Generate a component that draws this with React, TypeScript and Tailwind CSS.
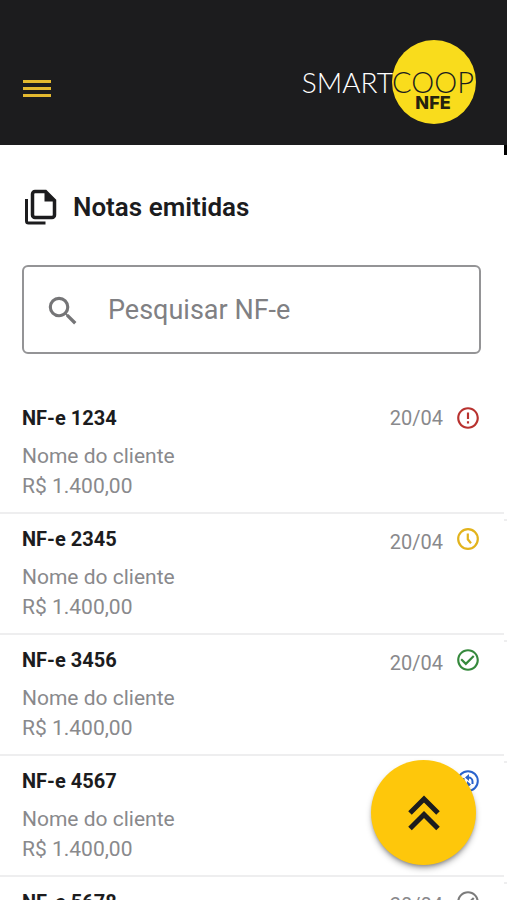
import { MdCheckCircleOutline, MdErrorOutline, MdSearch } from "react-icons/md";

type Status = "error" | "pending" | "done" | "returned" | "draft";

const notes: { id: string; status: Status }[] = [
  { id: "1234", status: "error" },
  { id: "2345", status: "pending" },
  { id: "3456", status: "done" },
  { id: "4567", status: "returned" },
  { id: "5678", status: "draft" },
];

const StatusIcon = ({ status }: { status: Status }) => {
  if (status === "error") return <MdErrorOutline className="size-[26px] text-[#b8322f]" />;
  if (status === "done") return <MdCheckCircleOutline className="size-[26px] text-[#35893c]" />;
  if (status === "draft") return <MdCheckCircleOutline className="size-[26px] text-[#7b7b7b]" />;
  if (status === "pending") {
    return (
      <svg viewBox="0 0 26 26" className="size-[26px] text-[#e2b31c]" fill="none" stroke="currentColor" strokeWidth="2.200">
        <circle cx="13" cy="13" r="9.800" />
        <path d="M12.800 7.500v5.800l3.200 4" />
      </svg>
    );
  }
  return (
    <svg viewBox="0 0 26 26" className="size-[26px] text-[#2a63cc]" fill="none" stroke="currentColor" strokeWidth="2">
      <circle cx="13" cy="13" r="9.800" />
      <path d="M12 9.500h1.500a4 4 0 0 1 4 4V16M8.500 10v2.500a4 4 0 0 0 4 4H14" />
      <path d="M14 6v7l-4-3.500zM12 13v7l4-3.500z" fill="currentColor" stroke="none" />
    </svg>
  );
};

const Logo = () => (
  <svg viewBox="0 0 174 84" className="h-[84px] w-[174px] overflow-visible" role="img" aria-label="SmartCoop NFE">
    <circle cx="132" cy="42" r="42" fill="#f9dc1c" />
    <g fontFamily="Lato, sans-serif" fontWeight="300">
      <text x="91" y="53" textAnchor="end" fontSize="28" fill="#ffffff">
        SMART
      </text>
      <text x="90" y="53" fontSize="29" fill="#1c1c1e">
        COOP
      </text>
    </g>
    <text x="131" y="69" textAnchor="middle" fontFamily="Inter, sans-serif" fontSize="18" fontWeight="800" fill="#25220f">
      NFE
    </text>
  </svg>
);

const App = () => {
  return (
    <div className="min-h-screen bg-white font-[Roboto,sans-serif] text-[#1c1c1e]">
      <header className="flex items-center justify-between bg-[#1c1c1e] pt-10 pr-[31px] pb-[21px] pl-[23px]">
        <button type="button" aria-label="Menu" className="mt-3 flex flex-col gap-1 text-[#e3b92f]">
          <span className="h-[3px] w-7 bg-current" />
          <span className="h-[3px] w-7 bg-current" />
          <span className="h-[3px] w-7 bg-current" />
        </button>
        <Logo />
      </header>

      <div className="flex">
        <main className="min-w-0 flex-1">
          <div className="pt-11 pr-[23px] pl-[22px]">
            <div className="flex items-center gap-[15px]">
              <svg viewBox="0 0 36 36" className="size-9" fill="none" stroke="currentColor" strokeWidth="3.500">
                <path d="M13 2.500h10.500l9 9V26a2.500 2.500 0 0 1-2.500 2.500H13a2.500 2.500 0 0 1-2.500-2.500V5A2.500 2.500 0 0 1 13 2.500z" />
                <path d="M22.500 2v10.500H33z" fill="currentColor" stroke="none" />
                <path d="M4.500 10v22a2 2 0 0 0 2 2h17" strokeWidth="3" />
              </svg>
              <h1 className="text-[26px] leading-9 font-semibold">Notas emitidas</h1>
            </div>

            <label className="mt-10 flex h-[89px] items-center gap-[26px] rounded-md border-2 border-[#949496] pt-0.5 pl-5">
              <MdSearch className="size-[38px] shrink-0 text-[#757577]" />
              <input
                type="search"
                aria-label="Pesquisar NF-e"
                placeholder="Pesquisar NF-e"
                className="min-w-0 flex-1 text-[27px] outline-none placeholder:text-[#808083]"
              />
            </label>
          </div>

          <ul className="mt-[39px]">
            {notes.map((note) => (
              <li
                key={note.id}
                className="group flex justify-between border-b-2 border-[#eeeeef] pt-3 pr-[23px] pb-[11px] pl-[22px]"
              >
                <div>
                  <h2 className="text-[20px] leading-[26px] font-bold">NF-e {note.id}</h2>
                  <p className="mt-2.5 text-[21px] leading-[30px] text-[#89898c]">Nome do cliente</p>
                  <p className="text-[21px] leading-[30px] text-[#89898c]">R$ 1.400,00</p>
                </div>
                <div className="flex h-[26px] items-end gap-3 group-first:items-center">
                  <span className="text-[20px] leading-5 text-[#89898c]">20/04</span>
                  <StatusIcon status={note.status} />
                </div>
              </li>
            ))}
          </ul>
        </main>

        {/* edge of the next screen */}
        <div className="flex w-[3px] flex-col">
          <div className="h-2.5 bg-black" />
          <div className="h-[245px]" />
          {notes.map((note) => (
            <div key={note.id} className="h-[121px] border-b-2 border-[#eeeeef]" />
          ))}
        </div>
      </div>

      <button
        type="button"
        aria-label="Voltar ao topo"
        className="fixed right-[31px] bottom-[35px] flex size-[105px] items-center justify-center rounded-full bg-[#fec70b] shadow-md shadow-black/35"
      >
        <svg viewBox="0 0 32 36" className="h-9 w-8" fill="none" stroke="currentColor" strokeWidth="5">
          <path d="M2 18 16 4l14 14M2 33.500l14-14 14 14" />
        </svg>
      </button>
    </div>
  );
};

export default App;
